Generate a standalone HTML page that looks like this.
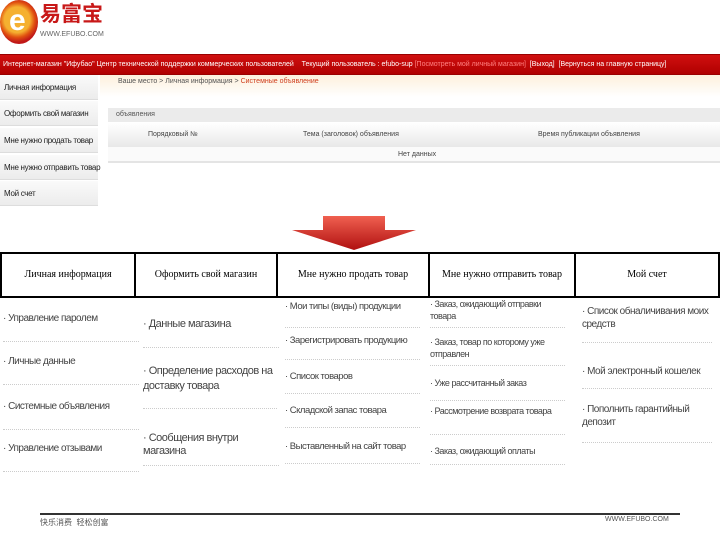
<!DOCTYPE html>
<html><head><meta charset="utf-8"><style>
*{margin:0;padding:0;box-sizing:border-box}
body{width:720px;height:540px;position:relative;background:#fff;font-family:"Liberation Sans","Noto Sans CJK SC",sans-serif;overflow:hidden;color:#333}
.a{position:absolute;white-space:nowrap}
.menu div{position:absolute;left:0;width:98px;height:25px;background:linear-gradient(#fafafa,#ececec);border-bottom:1px solid #ddd;font-size:8px;line-height:25px;padding-left:4px;color:#222;white-space:nowrap;letter-spacing:-0.3px}
.hd{position:absolute;top:252px;height:46px;border:2px solid #000;font-family:"Liberation Serif",serif;font-size:10px;line-height:42px;text-align:center;color:#000;white-space:nowrap}
.li{position:absolute;font-size:10px;color:#444;border-bottom:1px dotted #ccc;white-space:normal;line-height:13px;letter-spacing:-0.5px}
</style></head><body>
<div class="a" style="left:0;top:0;width:38px;height:44px;border-radius:50%;background:radial-gradient(circle at 45% 45%,#f5b030 0 40%,#e05010 55%,#c01818 70%)"></div>
<div class="a" style="left:9px;top:4px;font-size:30px;font-weight:bold;color:#fff">e</div>
<div class="a" style="left:40px;top:2px;font-size:21px;line-height:26px;color:#c81818;font-weight:bold">易富宝</div>
<div class="a" style="left:40px;top:31px;font-size:7px;color:#666">WWW.EFUBO.COM</div>
<div class="a" style="left:0;top:54px;width:720px;height:21px;background:linear-gradient(#d01010,#b00000);border-top:1px solid #900;border-bottom:1px solid #900;font-size:7px;color:#fff;line-height:19px;padding-left:3px">Интернет-магазин "Ифубао" Центр технической поддержки коммерческих пользователей &nbsp;&nbsp; Текущий пользователь : efubo-sup <span style="color:#ff8080">[Посмотреть мой личный магазин]</span> &nbsp;[Выход] &nbsp;[Вернуться на главную страницу]</div>
<div class="a" style="left:100px;top:75px;width:620px;height:22px;background:linear-gradient(#fdf0dc,#fff)"></div>
<div class="a" style="left:118px;top:78px;font-size:7px;color:#555">Ваше место &gt; Личная информация &gt; <span style="color:#d04020">Системные объявление</span></div>
<div class="menu">
<div style="top:75px">Личная информация</div>
<div style="top:101px">Оформить свой магазин</div>
<div style="top:128px">Мне нужно продать товар</div>
<div style="top:155px">Мне нужно отправить товар</div>
<div style="top:181px">Мой счет</div>
</div>
<div class="a" style="left:108px;top:108px;width:612px;height:14px;background:#ebebeb;font-size:7px;line-height:14px;padding-left:8px;color:#555">объявления</div>
<div class="a" style="left:108px;top:123px;width:612px;height:24px;background:linear-gradient(#fff,#e8e8e8);font-size:7px;line-height:24px;color:#444"><span class="a" style="left:40px">Порядковый №</span><span class="a" style="left:195px">Тема (заголовок) объявления</span><span class="a" style="left:430px">Время публикации объявления</span></div>
<div class="a" style="left:108px;top:147px;width:612px;height:16px;background:#fafafa;border-bottom:2px solid #e4e4e4;font-size:7px;line-height:16px;color:#444"><span class="a" style="left:290px">Нет данных</span></div>
<svg class="a" style="left:290px;top:216px" width="128" height="36"><defs><linearGradient id="g" x1="0" y1="0" x2="0" y2="1"><stop offset="0" stop-color="#f06050"/><stop offset="1" stop-color="#b01010"/></linearGradient></defs><polygon points="33,0 95,0 95,14 126,14 64,34 2,14 33,14" fill="url(#g)"/></svg>
<div class="hd" style="left:0;width:136px">Личная информация</div>
<div class="hd" style="left:134px;width:144px">Оформить свой магазин</div>
<div class="hd" style="left:276px;width:154px">Мне нужно продать товар</div>
<div class="hd" style="left:428px;width:148px">Мне нужно отправить товар</div>
<div class="hd" style="left:574px;width:146px">Мой счет</div>
<div class="li" style="left:3px;top:312px;width:136px;height:30px">· Управление паролем</div>
<div class="li" style="left:3px;top:355px;width:136px;height:30px">· Личные данные</div>
<div class="li" style="left:3px;top:400px;width:136px;height:30px">· Системные объявления</div>
<div class="li" style="left:3px;top:442px;width:136px;height:30px">· Управление отзывами</div>
<div class="li" style="left:143px;top:318px;width:136px;height:30px;font-size:11px">· Данные магазина</div>
<div class="li" style="left:143px;top:364px;width:134px;height:45px;font-size:11px;line-height:15px">· Определение расходов на доставку товара</div>
<div class="li" style="left:143px;top:432px;width:136px;height:34px;font-size:11px">· Сообщения внутри магазина</div>
<div class="li" style="left:285px;top:300px;width:135px;height:28px;font-size:9.5px;white-space:nowrap">· Мои типы (виды) продукции</div>
<div class="li" style="left:285px;top:334px;width:135px;height:26px;font-size:9.5px;white-space:nowrap">· Зарегистрировать продукцию</div>
<div class="li" style="left:285px;top:370px;width:135px;height:24px;font-size:9.5px">· Список товаров</div>
<div class="li" style="left:285px;top:404px;width:135px;height:24px;font-size:9.5px">· Складской запас товара</div>
<div class="li" style="left:285px;top:440px;width:135px;height:24px;font-size:9.5px;white-space:nowrap">· Выставленный на сайт товар</div>
<div class="li" style="left:430px;top:298px;width:135px;height:30px;font-size:9px;line-height:12px">· Заказ, ожидающий отправки товара</div>
<div class="li" style="left:430px;top:336px;width:135px;height:30px;font-size:9px;line-height:12px">· Заказ, товар по которому уже отправлен</div>
<div class="li" style="left:430px;top:377px;width:135px;height:24px;font-size:9px">· Уже рассчитанный заказ</div>
<div class="li" style="left:430px;top:405px;width:135px;height:30px;font-size:9px;line-height:12px">· Рассмотрение возврата товара</div>
<div class="li" style="left:430px;top:445px;width:135px;height:20px;font-size:9px">· Заказ, ожидающий оплаты</div>
<div class="li" style="left:582px;top:305px;width:130px;height:38px">· Список обналичивания моих средств</div>
<div class="li" style="left:582px;top:365px;width:130px;height:24px;white-space:nowrap">· Мой электронный кошелек</div>
<div class="li" style="left:582px;top:403px;width:130px;height:40px">· Пополнить гарантийный депозит</div>
<div class="a" style="left:40px;top:513px;width:640px;height:2px;background:#333"></div>
<div class="a" style="left:40px;top:517px;font-size:8px;color:#555">快乐消费 &nbsp;轻松创富</div>
<div class="a" style="left:605px;top:516px;font-size:7px;color:#555">WWW.EFUBO.COM</div>
</body></html>
